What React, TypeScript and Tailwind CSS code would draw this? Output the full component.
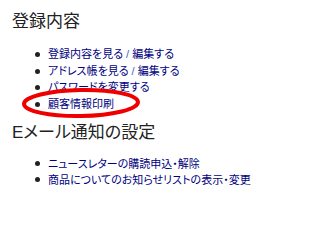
import React from 'react'

const font = { fontFamily: '"Liberation Sans", "Noto Sans CJK JP", sans-serif', fontFeatureSettings: '"palt"' }

const account = [
  { label: '登録内容を見る', edit: true },
  { label: 'アドレス帳を見る', edit: true },
  { label: 'パスワードを変更する' },
  { label: '顧客情報印刷' },
]

const mail = ['ニュースレターの購読申込・解除', '商品についてのお知らせリストの表示・変更']

function Item({ children }: { children: React.ReactNode }) {
  return (
    <li className="flex items-center">
      <span className="w-[5px] h-[5px] rounded-full bg-[#222] ml-[23px] mr-[8px]" />
      <span>{children}</span>
    </li>
  )
}

export default function App() {
  return (
    <div className="relative w-[335px] h-[230px] bg-white pl-[12px] pt-[11px]" style={font}>
      <h2 className="text-[17px] leading-[22px] text-[#222]">登録内容</h2>

      <ul className="mt-[13px] text-[11px] leading-[16.7px] text-[#000080]">
        {account.map((a) => (
          <Item key={a.label}>
            {a.label}
            {a.edit && (
              <>
                <span className="text-[#3366cc]"> / </span>編集する
              </>
            )}
          </Item>
        ))}
      </ul>

      <h2 className="mt-[9px] text-[17px] leading-[22px] text-[#222]">Eメール通知の設定</h2>

      <ul className="mt-[12px] text-[11px] leading-[16px] text-[#000080]">
        {mail.map((m) => (
          <Item key={m}>{m}</Item>
        ))}
      </ul>

      {/* hand-drawn highlight */}
      <svg className="absolute left-0 top-0 pointer-events-none" width="335" height="230">
        <ellipse cx="81" cy="103" rx="57" ry="13" fill="none" stroke="#ee0000" strokeWidth="4" transform="rotate(-1 81 103)" />
      </svg>
    </div>
  )
}
